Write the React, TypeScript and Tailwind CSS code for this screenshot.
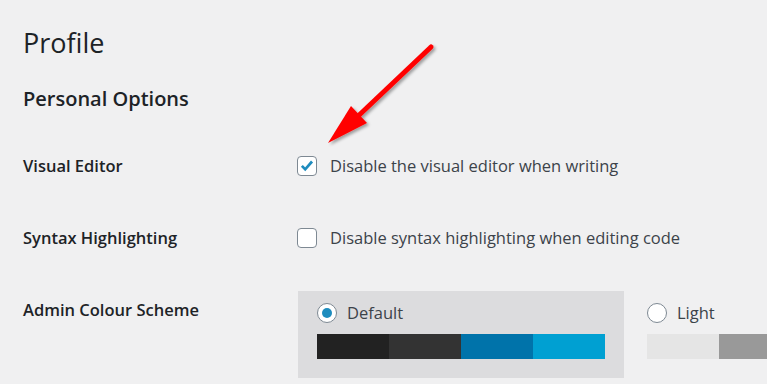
export default function App() {
  const font = { fontFamily: '"Open Sans", "Noto Sans", sans-serif' };
  return (
    <div
      className="relative w-[767px] h-[384px] overflow-hidden bg-[#f0f0f1] text-[#1d2327]"
      style={font}
    >
      <div className="pl-[23px] pt-[24px]">
        <h1 className="text-[27px] leading-[38px] font-normal">Profile</h1>
        <h2 className="mt-[23px] text-[20px] leading-[28px] font-semibold">Personal Options</h2>

        {/* Visual Editor */}
        <div className="mt-[41px] flex items-center h-[24px]">
          <div className="w-[274px] shrink-0 text-[16.5px] font-semibold">Visual Editor</div>
          <label className="flex items-center gap-[13px] text-[16.5px] text-[#3c434a] whitespace-nowrap">
            <span className="flex shrink-0 items-center justify-center w-[20px] h-[20px] rounded-[4px] border border-[#7e8993] bg-white">
              <svg viewBox="0 0 20 20" className="w-[18px] h-[18px]">
                <path d="M4.3 9.8l3.7 3.9L15.6 5" fill="none" stroke="#1e8cbe" strokeWidth="3" />
              </svg>
            </span>
            Disable the visual editor when writing
          </label>
        </div>

        {/* Syntax Highlighting */}
        <div className="mt-[48px] flex items-center h-[24px]">
          <div className="w-[274px] shrink-0 text-[16.5px] font-semibold">Syntax Highlighting</div>
          <label className="flex items-center gap-[13px] text-[16.5px] text-[#3c434a] whitespace-nowrap">
            <span className="w-[20px] h-[20px] shrink-0 rounded-[4px] border border-[#7e8993] bg-white" />
            Disable syntax highlighting when editing code
          </label>
        </div>

        {/* Admin Colour Scheme */}
        <div className="mt-[41px] flex">
          <div className="w-[275px] shrink-0 pt-[7px] text-[16.5px] font-semibold whitespace-nowrap">Admin Colour Scheme</div>
          <div className="flex gap-[4px] shrink-0">
            <div className="w-[326px] h-[87px] shrink-0 bg-[#dcdcde] pl-[19px] pt-[12px]">
              <div className="flex items-center gap-[10px] h-[20px] text-[16.5px] text-[#3c434a]">
                <span className="flex items-center justify-center w-[20px] h-[20px] rounded-full border border-[#7e8993] bg-white">
                  <span className="w-[10px] h-[10px] rounded-full bg-[#1e8cbe]" />
                </span>
                Default
              </div>
              <div className="mt-[11px] flex h-[25px]">
                <div className="w-[72px] bg-[#222222]" />
                <div className="w-[72px] bg-[#333333]" />
                <div className="w-[72px] bg-[#0073aa]" />
                <div className="w-[72px] bg-[#00a0d2]" />
              </div>
            </div>
            <div className="w-[326px] h-[87px] shrink-0 pl-[19px] pt-[12px]">
              <div className="flex items-center gap-[10px] h-[20px] text-[16.5px] text-[#3c434a]">
                <span className="w-[20px] h-[20px] rounded-full border border-[#7e8993] bg-white" />
                Light
              </div>
              <div className="mt-[11px] flex h-[25px]">
                <div className="w-[72px] bg-[#e5e5e5]" />
                <div className="w-[72px] bg-[#999999]" />
                <div className="w-[72px] bg-[#d64e07]" />
                <div className="w-[72px] bg-[#04a4cc]" />
              </div>
            </div>
          </div>
        </div>
      </div>

      {/* Red annotation arrow */}
      <svg className="absolute left-0 top-0 w-[767px] h-[384px] pointer-events-none" viewBox="0 0 767 384">
        <defs>
          <filter id="sh" x="-20%" y="-20%" width="140%" height="140%">
            <feDropShadow dx="2" dy="2" stdDeviation="1.5" floodColor="#000" floodOpacity="0.35" />
          </filter>
        </defs>
        <g filter="url(#sh)">
          <line x1="431" y1="47" x2="355" y2="119" stroke="#ff0000" strokeWidth="5" strokeLinecap="round" />
          <polygon points="328,143 351,106 367,123" fill="#ff0000" />
        </g>
      </svg>
    </div>
  );
}
